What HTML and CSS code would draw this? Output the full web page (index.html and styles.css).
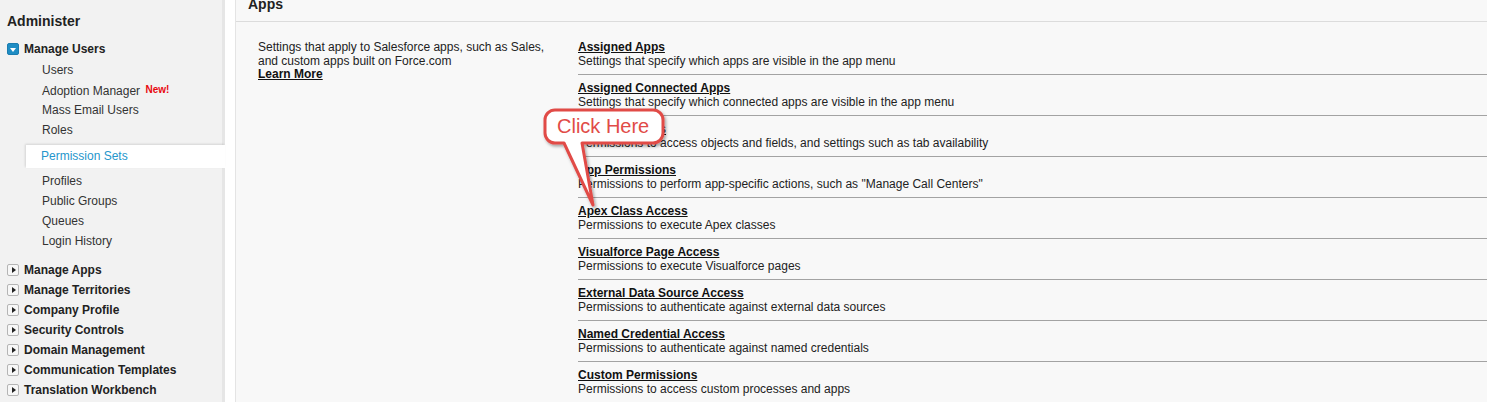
FILE: index.html
```html
<!DOCTYPE html>
<html lang="en">
<head>
<meta charset="UTF-8" />
<title>Setup — Apps</title>
<link rel="stylesheet" href="styles.css">
</head>
<body>

<aside class="sidebar">
  <h2>Administer</h2>

  <div class="group open">
    <div class="group-title"><span class="toggle toggle-open"></span>Manage Users</div>
    <ul class="sub">
      <li>Users</li>
      <li>Adoption Manager <span class="new">New!</span></li>
      <li>Mass Email Users</li>
      <li>Roles</li>
      <li class="selected">Permission Sets</li>
      <li>Profiles</li>
      <li>Public Groups</li>
      <li>Queues</li>
      <li>Login History</li>
    </ul>
  </div>

  <div class="closed-groups">
    <div class="group-title"><span class="toggle"></span>Manage Apps</div>
    <div class="group-title"><span class="toggle"></span>Manage Territories</div>
    <div class="group-title"><span class="toggle"></span>Company Profile</div>
    <div class="group-title"><span class="toggle"></span>Security Controls</div>
    <div class="group-title"><span class="toggle"></span>Domain Management</div>
    <div class="group-title"><span class="toggle"></span>Communication Templates</div>
    <div class="group-title"><span class="toggle"></span>Translation Workbench</div>
  </div>
</aside>

<main class="panel">
  <div class="panel-header">
    <h1>Apps</h1>
  </div>

  <div class="panel-body">
    <div class="intro">
      Settings that apply to Salesforce apps, such as Sales, and custom apps built on Force.com<br>
      <a href="#">Learn More</a>
    </div>

    <ul class="settings">
      <li><a href="#">Assigned Apps</a><p>Settings that specify which apps are visible in the app menu</p></li>
      <li><a href="#">Assigned Connected Apps</a><p>Settings that specify which connected apps are visible in the app menu</p></li>
      <li><a href="#">Object Settings</a><p>Permissions to access objects and fields, and settings such as tab availability</p></li>
      <li><a href="#">App Permissions</a><p>Permissions to perform app-specific actions, such as "Manage Call Centers"</p></li>
      <li><a href="#">Apex Class Access</a><p>Permissions to execute Apex classes</p></li>
      <li><a href="#">Visualforce Page Access</a><p>Permissions to execute Visualforce pages</p></li>
      <li><a href="#">External Data Source Access</a><p>Permissions to authenticate against external data sources</p></li>
      <li><a href="#">Named Credential Access</a><p>Permissions to authenticate against named credentials</p></li>
      <li><a href="#">Custom Permissions</a><p>Permissions to access custom processes and apps</p></li>
    </ul>
  </div>
</main>

<!-- callout over the list -->
<svg class="callout" width="140" height="110" viewBox="0 0 140 110">
  <defs>
    <filter id="shade" x="-20%" y="-20%" width="140%" height="140%">
      <feDropShadow dx="1.5" dy="2" stdDeviation="1.5" flood-color="#000" flood-opacity="0.35" />
    </filter>
  </defs>
  <path d="M15,6 H113 A10,10 0 0 1 123,16 V29 A10,10 0 0 1 113,39 H42 L53,101 L24,39 H15 A10,10 0 0 1 5,29 V16 A10,10 0 0 1 15,6 Z"
        fill="#fff" stroke="#e14b47" stroke-width="3" stroke-linejoin="round" filter="url(#shade)" />
  <text x="17" y="29" class="callout-text">Click Here</text>
</svg>

</body>
</html>
```

FILE: styles.css
```css
body {
  margin: 0;
  display: flex;
  align-items: flex-start;
  min-height: 402px;
  font-family: 'Liberation Sans', Arial, sans-serif;
  font-size: 12px;
  color: #222;
  background: #fff;
  position: relative;
  overflow: hidden;
}
.sidebar {
  width: 222px;
  flex: none;
  min-height: 402px;
  background: #f2f2f2;
  border-right: 3px solid #e6e6e6;
  padding-top: 12px;
  box-sizing: content-box;
}
.sidebar h2 {
  margin: 0 0 9px 7px;
  font-size: 14px;
  line-height: 18px;
  color: #222;
}
.group-title {
  display: flex;
  align-items: center;
  height: 20px;
  padding-left: 7px;
  font-weight: bold;
  color: #222;
}
.toggle {
  width: 10px;
  height: 10px;
  margin-right: 5px;
  border: 1px solid #b5b5b5;
  border-radius: 2px;
  background: #f7f7f7;
  position: relative;
  box-sizing: content-box;
}
.toggle::after {
  content: '';
  position: absolute;
  left: 4px; top: 2px;
  border-left: 4px solid #222;
  border-top: 3px solid transparent;
  border-bottom: 3px solid transparent;
}
.toggle-open {
  background: #1f8dc4;
  border-color: #1b7db0;
}
.toggle-open::after {
  left: 2px; top: 4px;
  border-top: 4px solid #fff;
  border-left: 3px solid transparent;
  border-right: 3px solid transparent;
  border-bottom: 0;
}
.sub {
  list-style: none;
  margin: 1px 0 0;
  padding: 0;
}
.sub li {
  height: 20px;
  line-height: 20px;
  padding-left: 42px;
  color: #333;
}
.new {
  color: #e8080f;
  font-weight: bold;
  font-size: 10px;
  vertical-align: 2px;
  margin-left: 2px;
}
.sub li.selected {
  margin: 5px -3px 3px 26px;
  padding-left: 15px;
  height: 23px;
  line-height: 23px;
  background: #fff;
  color: #2596cc;
  box-shadow: -1px -1px 2px rgba(0,0,0,0.12);
}
.closed-groups {
  margin-top: 9px;
}

.panel {
  flex: 1;
  margin-left: 10px;
  min-height: 402px;
  background: #f8f8f8;
  border-left: 1px solid #e4e4e4;
}
.panel-header {
  display: flow-root;
  height: 21px;
  padding: 0 12px;
  border-bottom: 1px solid #dcdcdc;
}
.panel-header h1 {
  margin: -5px 0 0;
  font-size: 14px;
  line-height: 18px;
  color: #222;
}
.panel-body {
  display: flex;
  padding-top: 12px;
}
.intro {
  width: 296px;
  margin-left: 22px;
  padding-top: 7px;
  line-height: 13.5px;
  color: #222;
}
.intro a, .settings a {
  color: #111;
  font-weight: bold;
  text-decoration: underline;
}
.settings {
  flex: 1;
  list-style: none;
  margin: 0 0 0 24px;
  padding: 0;
}
.settings li {
  padding: 6px 0;
  border-bottom: 1px solid #a3a3a3;
  line-height: 14px;
}
.settings p {
  margin: 0;
  color: #222;
}

.callout {
  position: absolute;
  left: 540px;
  top: 104px;
}
.callout-text {
  font-family: 'Liberation Sans', Arial, sans-serif;
  font-size: 20px;
  fill: #e14b47;
}
```
